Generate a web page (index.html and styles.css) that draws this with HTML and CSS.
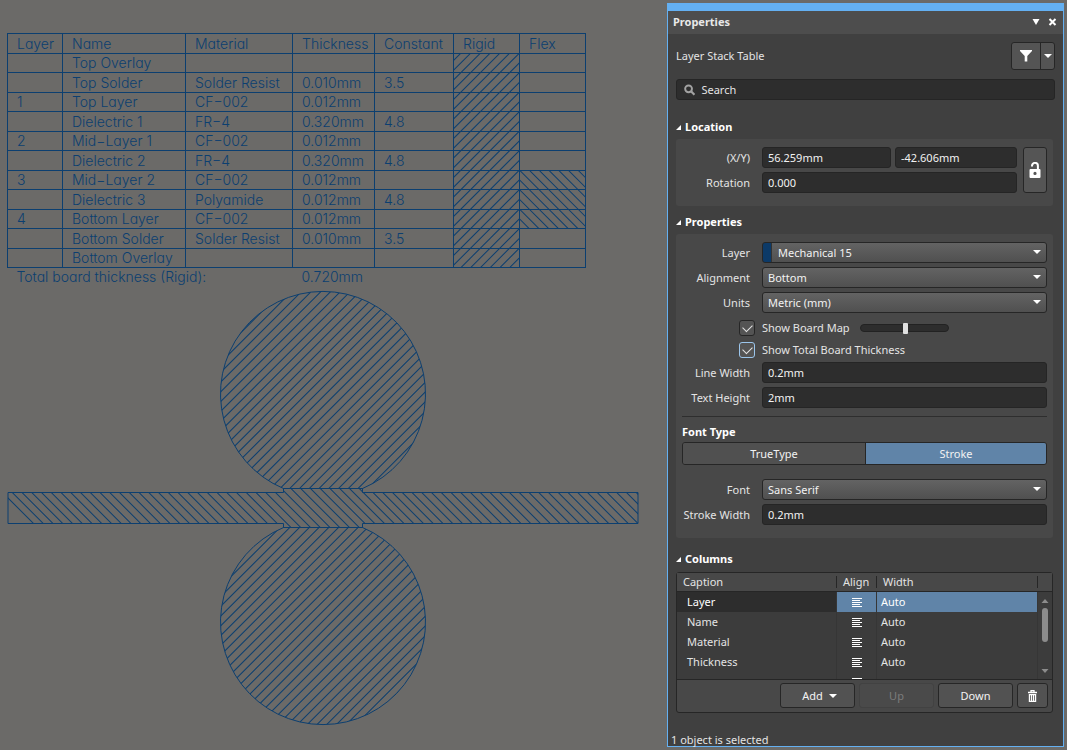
FILE: index.html
```html
<!DOCTYPE html>
<html lang="en">
<head>
<meta charset="utf-8">
<title>Layer Stack Table</title>
<link rel="stylesheet" href="styles.css">
</head>
<body>
<main class="canvas">
  <div class="stack">
    <table class="stack-table">
      <colgroup><col class="c-layer"><col class="c-name"><col class="c-material"><col class="c-thick"><col class="c-const"><col class="c-map"><col class="c-map"></colgroup>
      <thead><tr><th>Layer</th><th>Name</th><th>Material</th><th>Thickness</th><th>Constant</th><th>Rigid</th><th>Flex</th></tr></thead>
      <tbody>
        <tr><td></td><td>Top Overlay</td><td></td><td></td><td></td><td></td><td></td></tr>
        <tr><td></td><td>Top Solder</td><td>Solder Resist</td><td>0.010mm</td><td>3.5</td><td></td><td></td></tr>
        <tr><td>1</td><td>Top Layer</td><td>CF−002</td><td>0.012mm</td><td></td><td></td><td></td></tr>
        <tr><td></td><td>Dielectric 1</td><td>FR−4</td><td>0.320mm</td><td>4.8</td><td></td><td></td></tr>
        <tr><td>2</td><td>Mid−Layer 1</td><td>CF−002</td><td>0.012mm</td><td></td><td></td><td></td></tr>
        <tr><td></td><td>Dielectric 2</td><td>FR−4</td><td>0.320mm</td><td>4.8</td><td></td><td></td></tr>
        <tr><td>3</td><td>Mid−Layer 2</td><td>CF−002</td><td>0.012mm</td><td></td><td></td><td></td></tr>
        <tr><td></td><td>Dielectric 3</td><td>Polyamide</td><td>0.012mm</td><td>4.8</td><td></td><td></td></tr>
        <tr><td>4</td><td>Bottom Layer</td><td>CF−002</td><td>0.012mm</td><td></td><td></td><td></td></tr>
        <tr><td></td><td>Bottom Solder</td><td>Solder Resist</td><td>0.010mm</td><td>3.5</td><td></td><td></td></tr>
        <tr><td></td><td>Bottom Overlay</td><td></td><td></td><td></td><td></td><td></td></tr>
      </tbody>
      <tfoot><tr><td colspan="3">Total board thickness (Rigid):</td><td colspan="4">0.720mm</td></tr></tfoot>
    </table>
    <svg class="table-hatch" width="133" height="215" viewBox="454 53 133 215" aria-hidden="true">
      <defs>
        <clipPath id="rigidArea"><path d="M454 53H520V267H454Z"/></clipPath>
        <clipPath id="flexArea"><path d="M520 170H586V228H520Z"/></clipPath>
      </defs>
      <g clip-path="url(#rigidArea)"><path class="hatch" d="M0 7.35L800 807.35"/></g>
      <g clip-path="url(#flexArea)"><path class="hatch" d="M8.4 0L608.4-600"/></g>
    </svg>
  </div>
  <svg class="board-map" width="632" height="436" viewBox="7 290 632 436" role="img" aria-label="Board map">
    <defs>
      <clipPath id="balls"><path d="M283.5 488.5A102.5 102.5 0 1 1 362.5 488.5ZM283.5 527.5A102.5 102.5 0 1 0 362.5 527.5Z"/></clipPath>
      <clipPath id="core"><path d="M8 492.5H283.5V488.5H362.5V492.5H638V523.5H362.5V527.5H283.5V523.5H8Z"/></clipPath>
    </defs>
    <g clip-path="url(#balls)"><path class="hatch" d="M0 7.35L800 807.35"/></g>
    <g clip-path="url(#core)"><path class="hatch" d="M0 490.7L1000-509.3"/></g>
    <path class="outline" d="M283.5 488.5A102.5 102.5 0 1 1 362.5 488.5Z"/>
    <path class="outline" d="M283.5 527.5A102.5 102.5 0 1 0 362.5 527.5Z"/>
    <path class="outline" d="M8 492.5H283.5V488.5H362.5V492.5H638V523.5H362.5V527.5H283.5V523.5H8Z"/>
  </svg>
</main>

<aside class="panel">
  <header class="panel-head">
    <h1>Properties</h1>
    <button class="plain" aria-label="Panel menu"><svg width="8" height="6" viewBox="0 0 8 6"><path d="M.5 0H7.500L4 6Z" fill="#fff"/></svg></button>
    <button class="plain" aria-label="Close"><svg width="9" height="8" viewBox="0 0 9 8"><path d="M1.5 1L7.5 7M7.5 1L1.5 7" stroke="#fff" stroke-width="2"/></svg></button>
  </header>
  <div class="panel-body">
    <div class="object-row">
      <span>Layer Stack Table</span>
      <div class="split">
        <button aria-label="Filter"><svg width="12" height="12" viewBox="0 0 12 12"><path d="M0 0H12V1L7.3 6V11.5H4.7V6L0 1Z" fill="#fff"/></svg></button>
        <button aria-label="Filter options"><svg width="8" height="4" viewBox="0 0 8 4"><path d="M0 0H8L4 4Z" fill="#fff"/></svg></button>
      </div>
    </div>
    <label class="search">
      <svg width="12" height="12" viewBox="0 0 12 12"><circle cx="4.8" cy="4.8" r="3.6" fill="none" stroke="#a2a2a2" stroke-width="2"/><path d="M7.6 7.6L11 11" stroke="#a2a2a2" stroke-width="2.4"/></svg>
      <input type="text" placeholder="Search" aria-label="Search">
    </label>

    <h2>Location</h2>
    <section class="card location">
      <div class="form">
        <label for="x">(X/Y)</label>
        <div class="pair"><input id="x" type="text" value="56.259mm"><input type="text" aria-label="Y" value="-42.606mm"></div>
        <label for="rot">Rotation</label>
        <input id="rot" type="text" value="0.000">
      </div>
      <button class="lock" aria-label="Lock"><svg width="12" height="17" viewBox="0 0 12 17"><path d="M3 4.5V3.8A2.9 2.9 0 0 1 8.9 3.8V8" fill="none" stroke="#fff" stroke-width="2"/><path fill="#fff" fill-rule="evenodd" d="M1.5 7H10.5Q11.5 7 11.5 8V15Q11.5 16 10.5 16H1.5Q.5 16 .5 15V8Q.5 7 1.5 7ZM6 9.8A1.6 1.6 0 1 0 6 13A1.6 1.6 0 1 0 6 9.8Z"/></svg></button>
    </section>

    <h2>Properties</h2>
    <section class="card properties">
      <div class="form">
        <label for="layer">Layer</label>
        <div class="select swatch"><select id="layer"><option>Mechanical 15</option></select></div>
        <label for="alignment">Alignment</label>
        <div class="select"><select id="alignment"><option>Bottom</option></select></div>
        <label for="units">Units</label>
        <div class="select"><select id="units"><option>Metric (mm)</option></select></div>
        <div class="check-row"><label><input type="checkbox" checked>Show Board Map</label><input type="range" min="0" max="100" value="52" aria-label="Board map scale"></div>
        <div class="check-row short"><label><input class="focus" type="checkbox" checked>Show Total Board Thickness</label></div>
        <label for="lw">Line Width</label>
        <input id="lw" type="text" value="0.2mm">
        <label for="th">Text Height</label>
        <input id="th" type="text" value="2mm">
      </div>
      <hr>
      <h3>Font Type</h3>
      <div class="segment"><button>TrueType</button><button class="on">Stroke</button></div>
      <div class="form">
        <label for="font">Font</label>
        <div class="select"><select id="font"><option>Sans Serif</option></select></div>
        <label for="sw">Stroke Width</label>
        <input id="sw" type="text" value="0.2mm">
      </div>
    </section>

    <h2>Columns</h2>
    <section class="columns">
      <div class="scroll">
        <table>
          <colgroup><col><col class="w-align"><col class="w-width"><col class="w-bar"></colgroup>
          <thead><tr><th>Caption</th><th>Align</th><th>Width</th><th></th></tr></thead>
          <tbody>
            <tr class="selected"><td>Layer</td><td><svg class="align" width="10" height="9" viewBox="0 0 10 9"><path d="M0 .5H10M0 2.5H8M0 4.5H10M0 6.5H8M0 8.5H10"/></svg></td><td>Auto</td><td></td></tr>
            <tr><td>Name</td><td><svg class="align" width="10" height="9" viewBox="0 0 10 9"><path d="M0 .5H10M0 2.5H8M0 4.5H10M0 6.5H8M0 8.5H10"/></svg></td><td>Auto</td><td></td></tr>
            <tr><td>Material</td><td><svg class="align" width="10" height="9" viewBox="0 0 10 9"><path d="M0 .5H10M0 2.5H8M0 4.5H10M0 6.5H8M0 8.5H10"/></svg></td><td>Auto</td><td></td></tr>
            <tr><td>Thickness</td><td><svg class="align" width="10" height="9" viewBox="0 0 10 9"><path d="M0 .5H10M0 2.5H8M0 4.5H10M0 6.5H8M0 8.5H10"/></svg></td><td>Auto</td><td></td></tr>
            <tr><td></td><td><svg class="align" width="10" height="9" viewBox="0 0 10 9"><path d="M0 .5H10M0 2.5H8M0 4.5H10M0 6.5H8M0 8.5H10"/></svg></td><td></td><td></td></tr>
          </tbody>
        </table>
        <svg class="bar" width="8" height="76" viewBox="0 0 8 76" aria-hidden="true"><path d="M.5 5L4 1L7.500 5ZM.5 71L4 75L7.500 71Z" fill="#8c8c8c"/><rect x="1" y="10" width="6" height="34" rx="3" fill="#8c8c8c"/></svg>
      </div>
      <div class="actions">
        <button class="btn add">Add<svg width="8" height="4" viewBox="0 0 8 4"><path d="M0 0H8L4 4Z" fill="#fff"/></svg></button>
        <button class="btn" disabled>Up</button>
        <button class="btn">Down</button>
        <button class="btn trash" aria-label="Delete"><svg width="9" height="12" viewBox="0 0 9 12"><path d="M0 2.500H9M3 2V.7H6V2" fill="none" stroke="#fff" stroke-width="1.300"/><path fill="#fff" fill-rule="evenodd" d="M.8 4H8.200V12H.8ZM2.200 5.200V10.800H3V5.200ZM4.100 5.200V10.800H4.900V5.200ZM6 5.200V10.800H6.800V5.200Z"/></svg></button>
      </div>
    </section>
  </div>
  <footer class="status">1 object is selected</footer>
</aside>
</body>
</html>
```
FILE: styles.css
```css
* { box-sizing: border-box; }

body {
  margin: 0;
  min-height: 100vh;
  display: flex;
  background: #6b6a68;
  font: 11px/16px "Noto Sans", sans-serif;
  color: #e4e4e4;
}

button, input, select { font: inherit; color: inherit; margin: 0; }
svg { display: block; }

/* Drawing canvas */
.canvas { flex: 1; min-width: 0; padding: 33px 0 0 7px; overflow: hidden; }
.stack { position: relative; width: 579px; }
.stack-table {
  width: 100%;
  table-layout: fixed;
  border-collapse: collapse;
  color: #0c3f70;
  font: 300 14px/18px Inter, sans-serif;
  font-feature-settings: "cv11";
}
.stack-table tr { height: 19px; }
.stack-table thead tr, .stack-table tbody tr:nth-child(even) { height: 20px; }
.stack-table th, .stack-table td {
  padding: 0 0 0 9px;
  border: 1px solid #0c3f70;
  font-weight: 300;
  text-align: left;
  white-space: nowrap;
}
.stack-table tfoot td { border: 0; border-top: 1px solid #0c3f70; }
.c-layer { width: 55px; }
.c-name { width: 123px; }
.c-material { width: 107px; }
.c-thick { width: 82px; }
.c-const { width: 79px; }
.c-map { width: 66px; }
.table-hatch { position: absolute; top: 20px; right: 0; }
/* One very wide dashed stroke: every dash is one hatch line */
.hatch { fill: none; stroke: #0c3f70; stroke-width: 2400; stroke-dasharray: 1 5.894; }
.outline { fill: none; stroke: #0c3f70; stroke-width: 1; }
.board-map { margin-top: 3px; }

/* Properties panel */
.panel {
  width: 397px;
  margin: 3px 3px 3px 0;
  border: 1px solid #64b0f2;
  border-top-width: 8px;
  background: #404040;
  display: flex;
  flex-direction: column;
}
.panel-head { display: flex; align-items: center; gap: 8px; height: 23px; padding: 0 6px 1px 5px; background: #4d4d4d; }
h1, h2, h3 { margin: 0; font-size: 11px; line-height: 16px; color: #fff; }
.panel-head h1 { flex: 1; color: #e8e8e8; }
.plain { border: 0; padding: 0; background: none; }
.panel-body { flex: 1; padding: 8px 8px 0; }

.object-row { display: flex; justify-content: space-between; align-items: center; }
.split { display: flex; border: 1px solid #262626; border-radius: 3px; background: #545454; overflow: hidden; }
.split button { height: 26px; width: 28px; display: grid; place-items: center; padding: 0; border: 0; background: none; }
.split button + button { width: 14px; border-left: 1px solid #262626; }

input[type="text"] {
  width: 100%;
  min-width: 0;
  height: 21px;
  padding: 0 5px;
  border: 1px solid #252525;
  border-radius: 3px;
  background: #2d2d2d;
  color: #f2f2f2;
}
.search { display: flex; align-items: center; gap: 6px; height: 21px; margin: 9px 0 19px; padding: 0 7px; border: 1px solid #252525; border-radius: 3px; background: #2d2d2d; }
.search input[type="text"] { height: 19px; padding: 0; border: 0; background: none; }
.search input::placeholder { color: #e4e4e4; opacity: 1; }

h2 { display: flex; align-items: center; gap: 4px; }
h2::before { content: ""; border-bottom: 5px solid #fff; border-left: 5px solid transparent; }

.card { margin: 4px 2px 8px 0; padding: 8px 6px 13px; border-radius: 3px; background: #484848; }
.form { flex: 1; display: grid; grid-template-columns: 68px 1fr; gap: 4px 12px; align-items: center; }
.form > label { text-align: right; white-space: nowrap; }
.location { display: flex; gap: 6px; }
.card.properties { margin-bottom: 13px; }
.pair { display: grid; grid-template-columns: 129px 1fr; gap: 4px; }
.lock { width: 24px; display: grid; place-items: center; padding: 0; border: 1px solid #262626; border-radius: 3px; background: #555; }

.select { position: relative; }
.select select {
  display: block;
  width: 100%;
  height: 21px;
  padding: 0 5px;
  appearance: none;
  border: 1px solid #262626;
  border-radius: 3px;
  background: linear-gradient(#636363, #505050);
  color: #f2f2f2;
}
.select::after { content: ""; position: absolute; right: 6px; top: 8px; border: 4px solid transparent; border-top-color: #fff; border-bottom: 0; }
.swatch select { padding-left: 15px; background: linear-gradient(90deg, #0c3a68 8px, #333 8px, #333 9px, transparent 9px), linear-gradient(#636363, #505050); }

.check-row { grid-column: 1 / -1; height: 21px; display: flex; align-items: center; gap: 10px; padding-left: 57px; }
.check-row.short { height: 16px; }
.check-row label { display: flex; align-items: center; gap: 7px; }
input[type="checkbox"] { appearance: none; width: 16px; height: 16px; border: 1px solid #262626; border-radius: 3px; background: #545454; display: grid; place-items: center; }
input[type="checkbox"]:checked::before { content: ""; width: 8px; height: 5px; border: solid #e4e4e4; border-width: 0 0 1px 1px; transform: translateY(-1px) rotate(-45deg); }
input[type="checkbox"].focus { border-color: #9cc6ec; }
input[type="range"] { appearance: none; width: 89px; height: 12px; background: none; }
input[type="range"]::-webkit-slider-runnable-track { height: 8px; border: 1px solid #222; border-radius: 4px; background: #2d2d2d; }
input[type="range"]::-webkit-slider-thumb { appearance: none; width: 5px; height: 11px; margin-top: -2px; border-radius: 1px; background: #e0e0e0; }

hr { height: 1px; margin: 8px 0 7px; border: 0; background: #2e2e2e; }
.segment { display: grid; grid-template-columns: 182px 1fr; margin: 2px 0 14px; border: 1px solid #262626; border-radius: 3px; overflow: hidden; }
.segment button { height: 21px; padding: 0; border: 0; background: #505050; color: #f2f2f2; }
.segment .on { border-left: 1px solid #262626; background: #6084a8; }

/* Columns list */
.columns { margin: 5px 2px 0 0; border: 1px solid #262626; border-radius: 3px; background: #484848; }
.scroll { position: relative; height: 107px; overflow: hidden; border-bottom: 1px solid #262626; background: #3c3c3c; }
.scroll table { width: 100%; table-layout: fixed; border-collapse: separate; border-spacing: 0; }
.w-align { width: 40px; }
.w-width { width: 161px; }
.w-bar { width: 14px; }
.scroll th { height: 19px; padding: 0 6px; border-bottom: 1px solid #262626; background: linear-gradient(#262626, #262626) right center / 1px 12px no-repeat #484848; font-weight: 400; text-align: left; line-height: 16px; }
.scroll th:last-child { background: #484848; }
.scroll td { height: 20px; padding: 0 4px; line-height: 16px; border-right: 1px solid #363636; }
.scroll td:first-child { padding-left: 10px; }
.scroll td:last-child { border: 0; }
.selected td { background: #6084a8; color: #fff; }
.scroll .selected td:first-child { background: #2d2d2d; }
.scroll .selected td:last-child { background: none; }
.align { margin: 0 auto; stroke: #fff; stroke-width: 1; fill: none; }
.bar { position: absolute; right: 3px; top: 25px; }
.actions { display: flex; justify-content: flex-end; gap: 4px; padding: 3px 4px 4px; }
.btn { display: flex; align-items: center; justify-content: center; width: 75px; height: 25px; padding: 0; border: 1px solid #262626; border-radius: 3px; background: #525252; color: #f2f2f2; }
.add { gap: 6px; padding-left: 4px; }
.btn:disabled { border-color: #424242; background: #4a4a4a; color: #7c7c7c; }
.trash { width: 31px; }
.status { padding: 0 3px; line-height: 13px; }
```
